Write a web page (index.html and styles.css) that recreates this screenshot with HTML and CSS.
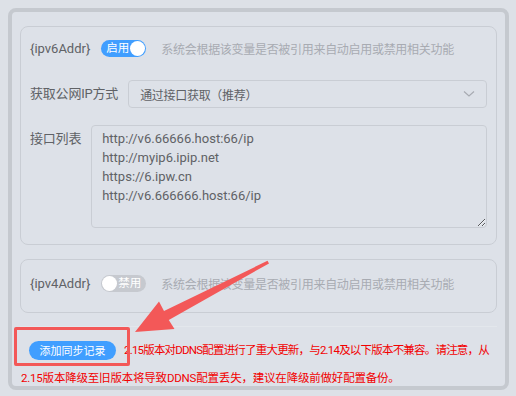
FILE: index.html
```html
<!DOCTYPE html>
<html lang="zh-CN">
  <head>
    <meta charset="UTF-8" />
    <meta name="viewport" content="width=device-width, initial-scale=1.0" />
    <title>DDNS 配置</title>
    <link rel="stylesheet" href="styles.css">
  </head>
  <body>
    <div class="panel">
      <div class="card card-v6">
        <div class="row">
          <span class="var-name">{ipv6Addr}</span>
          <span class="switch on"><span class="switch-text">启用</span><span class="knob"></span></span>
          <span class="hint">系统会根据该变量是否被引用来自动启用或禁用相关功能</span>
        </div>
        <div class="row row-select">
          <label class="label">获取公网IP方式</label>
          <div class="select">
            <span>通过接口获取（推荐）</span>
            <svg class="chevron" width="12" height="8" viewBox="0 0 12 8">
              <polyline points="1,1.5 6,6 11,1.5" fill="none" stroke="#a8abb2" stroke-width="1.2" />
            </svg>
          </div>
        </div>
        <div class="row row-area">
          <label class="label">接口列表</label>
          <textarea class="urls" readonly>http://v6.66666.host:66/ip
http://myip6.ipip.net
https://6.ipw.cn
http://v6.666666.host:66/ip</textarea>
        </div>
      </div>

      <div class="card card-v4">
        <div class="row">
          <span class="var-name">{ipv4Addr}</span>
          <span class="switch off"><span class="knob"></span><span class="switch-text">禁用</span></span>
          <span class="hint">系统会根据该变量是否被引用来自动启用或禁用相关功能</span>
        </div>
      </div>

      <div class="footer">
        <p class="notice">
          <button class="add-btn">添加同步记录</button><span class="first-line">2.15版本对DDNS配置进行了重大更新，与2.14及以下版本不兼容。请注意，从</span><br>2.15版本降级至旧版本将导致DDNS配置丢失，建议在降级前做好配置备份。
        </p>
        <div class="mark-box"></div>
      </div>
    </div>

    <!-- annotation arrow -->
    <svg class="arrow" width="516" height="396" viewBox="0 0 516 396">
      <polygon fill="#f35858" points="135,332 159,301.5 164,311 267.5,260.8 269,263.4 168.8,320 174.5,329" />
    </svg>
  </body>
</html>
```

FILE: styles.css
```css
* {
  margin: 0;
  padding: 0;
  box-sizing: border-box;
}

body {
  font-family: "Roboto", "Noto Sans CJK SC", sans-serif;
  background: #dde1e7;
  width: 516px;
  height: 396px;
  padding: 8px 7px 6px 8px;
  overflow: hidden;
  color: #606266;
}

.panel {
  height: 382px;
  border: 4px solid #c5c9cf;
  border-radius: 8px;
  padding: 14px 8px 0 8px;
  background: #dde1e8;
  overflow: hidden;
}

.card {
  border: 1px solid #c9cdd4;
  border-radius: 8px;
  padding: 7px 9px 16px 9px;
}

.card-v4 {
  margin-top: 14px;
  padding: 9px 9px 15px 9px;
}

.row {
  display: flex;
  align-items: center;
  height: 28px;
}

.var-name {
  font-size: 13px;
  color: #606266;
}

.switch {
  display: inline-flex;
  align-items: center;
  justify-content: space-between;
  width: 45px;
  height: 17px;
  border-radius: 9px;
  margin-left: 11px;
  padding: 0 1px;
}

.switch.on {
  background: #409eff;
  padding-left: 5px;
}

.switch.off {
  background: #c6c9cf;
  padding-right: 5px;
}

.switch-text {
  font-size: 11.5px;
  color: #ffffff;
  line-height: 17px;
}

.knob {
  width: 15px;
  height: 15px;
  border-radius: 50%;
  background: #ffffff;
}

.hint {
  margin-left: 15px;
  font-size: 12px;
  letter-spacing: -0.3px;
  color: #a8abb2;
}

.row-select {
  margin-top: 18px;
  gap: 10px;
}

.label {
  font-size: 13px;
  letter-spacing: -0.2px;
  color: #606266;
  line-height: 28px;
  white-space: nowrap;
}

.select {
  flex: 1;
  height: 28px;
  display: flex;
  align-items: center;
  justify-content: space-between;
  border: 1px solid #c9cdd4;
  border-radius: 4px;
  padding: 0 11px;
  font-size: 12px;
  letter-spacing: -0.3px;
  color: #606266;
}

.row-area {
  margin-top: 17px;
  height: auto;
  align-items: flex-start;
  gap: 10px;
}

.urls {
  flex: 1;
  height: 103px;
  border: 1px solid #c9cdd4;
  border-radius: 4px;
  background: transparent;
  padding: 3px 10px;
  font-family: "Roboto", sans-serif;
  font-size: 13px;
  line-height: 19px;
  color: #606266;
  outline: none;
}

.footer {
  position: relative;
  margin-top: 13px;
  border-top: 1px solid #e3e7ec;
  padding: 9px 0 0 1px;
}

.notice {
  font-size: 11.5px;
  line-height: 28px;
  color: #f20000;
  letter-spacing: -0.2px;
  white-space: nowrap;
}

.first-line {
  letter-spacing: -0.8px;
}

.add-btn {
  display: inline-block;
  width: 87px;
  height: 19px;
  margin: 0 8px 0 8px;
  padding: 0;
  border: none;
  border-radius: 10px;
  background: #409eff;
  color: #ffffff;
  font-family: "Noto Sans CJK SC", sans-serif;
  font-size: 11px;
  line-height: 19px;
  vertical-align: middle;
}

.mark-box {
  position: absolute;
  left: -6px;
  top: 0;
  width: 116px;
  height: 39px;
  border: 3px solid #f35858;
  border-radius: 2px;
}

.arrow {
  position: absolute;
  left: 0;
  top: 0;
  pointer-events: none;
}
```
